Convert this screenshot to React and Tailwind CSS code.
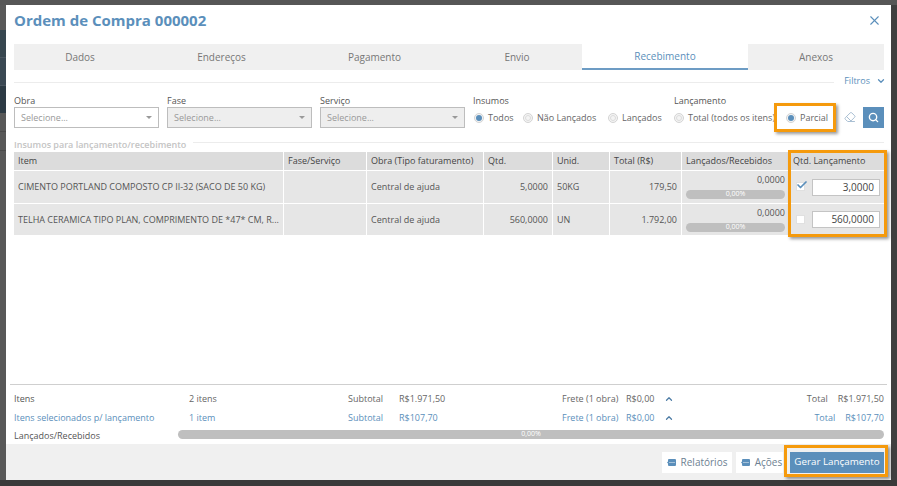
import React from "react";
import { X, ChevronDown, ChevronUp, Search, Eraser, Check } from "lucide-react";

const font = { fontFamily: '"Open Sans", sans-serif' };

function Select({ disabled, label, className }) {
  return (
    <div className={`flex flex-col ${className}`}>
      <div className="h-[13px] text-[9px] leading-[13px] text-[#555]">{label}</div>
      <div className={`h-[21px] border border-[#bdbdbd] flex items-center justify-between pl-[6px] pr-[3px] text-[9px] text-[#999] ${disabled ? "bg-[#eeeeee]" : "bg-white"}`}>
        <span>Selecione...</span>
        <span className="w-0 h-0 mr-[3px] border-l-[3px] border-r-[3px] border-t-[3px] border-l-transparent border-r-transparent border-t-[#999]" />
      </div>
    </div>
  );
}

function Radio({ on, label, className = "" }) {
  return (
    <div className={`flex items-center gap-[4px] text-[9px] text-[#666] whitespace-nowrap ${className}`}>
      <span className="w-[10px] h-[10px] rounded-full border border-[#d4d4d4] bg-[#f4f4f4] flex items-center justify-center shrink-0">
        {on ? <span className="w-[6px] h-[6px] rounded-full bg-[#5b8fbb]" /> : <span className="w-[6px] h-[6px] rounded-full border border-[#dcdcdc]" />}
      </span>
      <span>{label}</span>
    </div>
  );
}

function Th({ children, tight }) {
  return <div className={`bg-[#dcdcdc] flex items-center text-[9px] text-[#444] whitespace-nowrap overflow-hidden ${tight ? "px-[2px]" : "px-[4px]"}`}>{children}</div>;
}
function Td({ children, right }) {
  return <div className={`bg-[#e6e6e6] px-[4px] flex items-center text-[9px] text-[#555] whitespace-nowrap overflow-hidden ${right ? "justify-end" : ""}`}>{children}</div>;
}
function Progress({ className = "" }) {
  return <div className={`bg-[#bfbfbf] rounded-full text-white text-[7px] flex items-center justify-center ${className}`}>0,00%</div>;
}
function Launched() {
  return (
    <div className="bg-[#e6e6e6] pl-[4px] pr-[5px] pt-[2px] flex flex-col text-[9px] text-[#555]">
      <div className="text-right leading-[13px]">0,0000</div>
      <Progress className="h-[9px] mt-[4px]" />
    </div>
  );
}
function QtyCell({ checked, value }) {
  return (
    <div className="bg-[#e6e6e6] pl-[5px] pr-[4px] flex items-center justify-between">
      <span className={`relative w-[9px] h-[9px] bg-white border border-[#e0e0e0] ${checked ? "-mt-[2px]" : ""}`}>
        {checked && <Check size={12} strokeWidth={3.5} className="absolute -top-[4px] -left-[1px] text-[#5b8fbb]" />}
      </span>
      <div className="w-[68px] h-[17px] bg-white border border-[#c4c4c4] flex items-center justify-end pr-[5px] text-[10px] text-[#444]">{value}</div>
    </div>
  );
}
function Highlight({ className }) {
  return <div className={`absolute border-[3px] border-[#f59a0c] shadow-[2px_2px_3px_rgba(0,0,0,0.4)] pointer-events-none ${className}`} />;
}
function SmallButton({ label, className = "" }) {
  return (
    <div className={`h-[21px] bg-white flex items-center justify-center gap-[5px] text-[10px] text-[#6d7f92] ${className}`}>
      <svg width="9" height="7" viewBox="0 0 9 7">
        <path d="M2 0h6a1 1 0 0 1 1 1v5a1 1 0 0 1-1 1H2a1 1 0 0 1-1-1V4.5L0 3.5l1-1V1a1 1 0 0 1 1-1z" fill="#5b8fbb" />
        <circle cx="3" cy="3.5" r=".6" fill="#fff" />
        <circle cx="5" cy="3.5" r=".6" fill="#fff" />
        <circle cx="7" cy="3.5" r=".6" fill="#fff" />
      </svg>
      {label}
    </div>
  );
}
function SummaryRow({ blue, a, b, c, d, f, g, h, i }) {
  return (
    <div className={`flex items-center h-[19px] text-[9px] ${blue ? "text-[#5b8fbb]" : "text-[#666]"}`}>
      <div className={`w-[175px] ${blue ? "" : "text-[#555]"}`}>{a}</div>
      <div className="w-[159px]">{b}</div>
      <div className="w-[51px]">{c}</div>
      <div className="w-[163px]">{d}</div>
      <div className="w-[64px]">{f}</div>
      <div className="w-[38px]">{g}</div>
      <ChevronUp size={10} strokeWidth={3} className="text-[#4d7ca5]" />
      <div className="flex-1 flex justify-end gap-[10px]">
        <span>{h}</span>
        <span>{i}</span>
      </div>
    </div>
  );
}

export default function App() {
  return (
    <div style={font} className="w-[897px] h-[486px] bg-[#3b3b3b] flex flex-col overflow-hidden">
      <div className="h-[5px] bg-[#565656] shrink-0" />
      <div className="flex h-[475px] shrink-0">
        <div className="w-[6px] flex flex-col bg-[#585858] shrink-0">
          <div className="h-[25px]" />
          <div className="h-[27px] bg-[#37464f]" />
          <div className="h-[28px] bg-[#3a4853] border-t border-[#4a5660]" />
          <div className="h-[28px] bg-[#2c3a44] border-t border-[#4a5660]" />
          <div className="h-[19px] border-b border-[#4a4a4a]" />
          <div className="h-[19px] border-b border-[#4a4a4a]" />
          <div className="flex-1" />
        </div>
        <div className="relative w-[885px] bg-white flex flex-col">
          <div className="h-[39px] flex items-center justify-between pl-[8px] pr-[9px] shrink-0">
            <div className="text-[15px] font-bold text-[#5b8fbb] leading-none pb-[8px]">Ordem de Compra 000002</div>
            <X size={15} strokeWidth={1.75} className="text-[#5b8fbb] mb-[8px]" />
          </div>

          <div className="ml-[8px] mr-[7px] flex h-[26px] bg-[#f0f0f0] text-[10px] text-[#777] shrink-0">
            <div className="w-[132px] flex items-center justify-center">Dados</div>
            <div className="w-[151px] flex items-center justify-center">Endereços</div>
            <div className="w-[155px] flex items-center justify-center">Pagamento</div>
            <div className="w-[130px] flex items-center justify-center">Envio</div>
            <div className="w-[166px] flex items-center justify-center bg-white text-[#5b8fbb] border-b-2 border-[#6d9cc4]">Recebimento</div>
            <div className="flex-1 flex items-center justify-center">Anexos</div>
          </div>

          <div className="ml-[8px] mr-[5px] mt-[5px] h-[11px] flex items-center shrink-0">
            <div className="flex-1 h-px bg-[#ececec] mt-[3px]" />
            <div className="pl-[10px] text-[9px] text-[#5b8fbb] flex items-center gap-[6px]">
              Filtros <ChevronDown size={10} strokeWidth={3} />
            </div>
          </div>

          <div className="ml-[8px] mr-[7px] mt-[8px] flex h-[34px] shrink-0">
            <Select label="Obra" className="w-[145px]" />
            <Select label="Fase" disabled className="w-[145px] ml-[8px]" />
            <Select label="Serviço" disabled className="w-[145px] ml-[8px]" />
            <div className="ml-[8px] w-[201px] flex flex-col">
              <div className="h-[13px] text-[9px] leading-[13px] text-[#555]">Insumos</div>
              <div className="h-[21px] flex items-center pl-[1px]">
                <Radio on label="Todos" className="w-[49px]" />
                <Radio label="Não Lançados" className="w-[85px]" />
                <Radio label="Lançados" />
              </div>
            </div>
            <div className="flex flex-col">
              <div className="h-[13px] text-[9px] leading-[13px] text-[#555]">Lançamento</div>
              <div className="h-[21px] flex items-center">
                <Radio label="Total (todos os itens)" className="w-[112px]" />
                <Radio on label="Parcial" />
              </div>
            </div>
            <div className="ml-auto flex items-end gap-[7px]">
              <Eraser size={12} className="text-[#a9bfd3] mb-[5px]" />
              <div className="w-[21px] h-[21px] bg-[#5b8fbb] flex items-center justify-center">
                <Search size={11} strokeWidth={3} className="text-white" />
              </div>
            </div>
          </div>

          <div className="ml-[8px] mr-[7px] mt-[10px] h-[13px] flex items-center shrink-0">
            <div className="text-[9px] font-semibold text-[#c4c4c4] whitespace-nowrap">Insumos para lançamento/recebimento</div>
            <div className="flex-1 h-px bg-[#ececec] ml-[7px] -mt-[4px]" />
          </div>

          <div className="ml-[8px] mr-[7px] mt-[1px] grid grid-cols-[269px_82px_116px_68px_56px_71px_108px_93px] grid-rows-[18px_32px_31px] gap-px shrink-0">
            <Th>Item</Th><Th>Fase/Serviço</Th><Th>Obra (Tipo faturamento)</Th><Th>Qtd.</Th><Th>Unid.</Th><Th>Total (R$)</Th><Th>Lançados/Recebidos</Th><Th tight>Qtd. Lançamento</Th>
            <Td>CIMENTO PORTLAND COMPOSTO CP II-32 (SACO DE 50 KG)</Td><Td /><Td>Central de ajuda</Td><Td right>5,0000</Td><Td>50KG</Td><Td right>179,50</Td><Launched /><QtyCell checked value="3,0000" />
            <Td>TELHA CERAMICA TIPO PLAN, COMPRIMENTO DE *47* CM, R...</Td><Td /><Td>Central de ajuda</Td><Td right>560,0000</Td><Td>UN</Td><Td right>1.792,00</Td><Launched /><QtyCell value="560,0000" />
          </div>

          <div className="flex-1" />

          <div className="mx-[4px] border-t border-[#cfcfcf] shrink-0">
            <div className="pl-[4px] pr-[3px] pt-[4px]">
              <SummaryRow a="Itens" b="2 itens" c="Subtotal" d="R$1.971,50" f="Frete (1 obra)" g="R$0,00" h="Total" i="R$1.971,50" />
              <SummaryRow blue a="Itens selecionados p/ lançamento" b="1 item" c="Subtotal" d="R$107,70" f="Frete (1 obra)" g="R$0,00" h="Total" i="R$107,70" />
              <div className="flex items-center h-[17px] text-[9px] text-[#555]">
                <div className="w-[164px]">Lançados/Recebidos</div>
                <Progress className="flex-1 h-[9px] -mt-[2px]" />
              </div>
            </div>
          </div>

          <div className="h-[36px] bg-[#f0f0f0] flex items-center justify-end pr-[7px] shrink-0">
            <SmallButton label="Relatórios" className="w-[70px]" />
            <SmallButton label="Ações" className="w-[47px] ml-[4px] pl-[4px]" />
            <div className="w-[94px] h-[21px] bg-[#5b8fbb] text-white text-[9.8px] flex items-center justify-center ml-[7px]">Gerar Lançamento</div>
          </div>

          <Highlight className="left-[768px] top-[98px] w-[62px] h-[29px]" />
          <Highlight className="left-[782px] top-[145px] w-[99px] h-[87px]" />
          <Highlight className="left-[778px] top-[440px] w-[104px] h-[32px]" />
        </div>
        <div className="w-[6px] bg-[#3f3f3f] shrink-0" />
      </div>
      <div className="flex-1 bg-[#3a3a3a]" />
    </div>
  );
}
